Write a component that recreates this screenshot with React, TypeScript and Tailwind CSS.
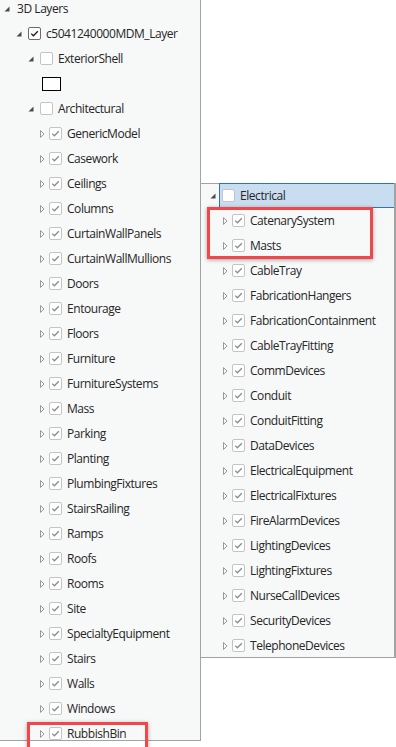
import React from "react";

const architectural = [
  "GenericModel",
  "Casework",
  "Ceilings",
  "Columns",
  "CurtainWallPanels",
  "CurtainWallMullions",
  "Doors",
  "Entourage",
  "Floors",
  "Furniture",
  "FurnitureSystems",
  "Mass",
  "Parking",
  "Planting",
  "PlumbingFixtures",
  "StairsRailing",
  "Ramps",
  "Roofs",
  "Rooms",
  "Site",
  "SpecialtyEquipment",
  "Stairs",
  "Walls",
  "Windows",
  "RubbishBin",
];

const electrical = [
  "CatenarySystem",
  "Masts",
  "CableTray",
  "FabricationHangers",
  "FabricationContainment",
  "CableTrayFitting",
  "CommDevices",
  "Conduit",
  "ConduitFitting",
  "DataDevices",
  "ElectricalEquipment",
  "ElectricalFixtures",
  "FireAlarmDevices",
  "LightingDevices",
  "LightingFixtures",
  "NurseCallDevices",
  "SecurityDevices",
  "TelephoneDevices",
];

function Expanded() {
  return (
    <svg width="12" height="12" viewBox="0 0 12 12" className="shrink-0">
      <path d="M8.5 3.5 L8.5 8.5 L3.5 8.5 Z" fill="#4a4a4a" />
    </svg>
  );
}

function Collapsed() {
  return (
    <svg width="12" height="12" viewBox="0 0 12 12" className="shrink-0">
      <path d="M6.5 2.5 L10 6 L6.5 9.5 Z" fill="none" stroke="#9a9a9a" strokeWidth="1" />
    </svg>
  );
}

function Box({ checked, dark }: { checked?: boolean; dark?: boolean }) {
  return (
    <div
      className={`w-[13px] h-[13px] shrink-0 rounded-[2px] border bg-white flex items-center justify-center ${
        dark ? "border-[#6b6b6b]" : "border-[#c4c4c4]"
      }`}
    >
      {checked && (
        <svg width="11" height="11" viewBox="0 0 11 11">
          <path
            d="M2.2 5.6 L4.4 7.8 L8.8 3.2"
            fill="none"
            stroke={dark ? "#1a1a1a" : "#8c8c8c"}
            strokeWidth="1.3"
          />
        </svg>
      )}
    </div>
  );
}

function Row({ children, pl }: { children: React.ReactNode; pl: string }) {
  return <div className={`h-[25px] flex items-center gap-[3px] ${pl}`}>{children}</div>;
}

export default function App() {
  return (
    <div
      className="relative w-[396px] h-[747px] bg-white overflow-hidden text-[12px] tracking-[-0.45px] text-[#262626]"
      style={{ fontFamily: '"Segoe UI", "Open Sans", "Noto Sans", sans-serif' }}
    >
      {/* ---------- main tree ---------- */}
      <div className="w-[201px] h-[741px] bg-[#f7f8f8] border-r border-b border-[#a3a3a3] overflow-hidden">
        <div className="-mt-[4px]">
          <Row pl="pl-[1px]">
            <Expanded />
            <span className="ml-[1px]">3D Layers</span>
          </Row>
          <Row pl="pl-[13px]">
            <Expanded />
            <Box checked dark />
            <span className="ml-[2px]">c5041240000MDM_Layer</span>
          </Row>
          <Row pl="pl-[25px]">
            <Expanded />
            <Box />
            <span className="ml-[2px]">ExteriorShell</span>
          </Row>
          <div className="h-[25px] flex items-center pl-[42px]">
            <div className="w-[19px] h-[14px] border border-black bg-white" />
          </div>
          <Row pl="pl-[25px]">
            <Expanded />
            <Box />
            <span className="ml-[2px]">Architectural</span>
          </Row>
          {architectural.map((name) => (
            <Row key={name} pl="pl-[34px]">
              <Collapsed />
              <Box checked />
              <span className="ml-[2px]">{name}</span>
            </Row>
          ))}
        </div>
      </div>

      {/* red mark on RubbishBin */}
      <div className="absolute left-[27px] top-[722px] w-[121px] h-[28px] border-[3px] border-[#f2464b] shadow-[0_1px_4px_rgba(0,0,0,0.35)]" />

      {/* ---------- Electrical popup ---------- */}
      <div className="absolute left-[200px] top-[183px] w-[196px] h-[475px] bg-[#f7f8f8] border border-[#a3a3a3] border-r-2">
        <div className="-mt-px h-[25px] flex items-center pl-[6px]">
          <Expanded />
          <div className="flex-1 h-[25px] flex items-center gap-[3px] pl-[2px] bg-[#c9ddf1] border-t border-b border-l border-[#2f72bd]">
            <Box />
            <span className="ml-[2px]">Electrical</span>
          </div>
        </div>
        {electrical.map((name) => (
          <Row key={name} pl="pl-[16px]">
            <Collapsed />
            <Box checked />
            <span className="ml-[2px]">{name}</span>
          </Row>
        ))}
        <div className="absolute left-[6px] top-[23px] w-[166px] h-[52px] border-[3px] border-[#f2464b] shadow-[0_1px_4px_rgba(0,0,0,0.35)]" />
      </div>
    </div>
  );
}
